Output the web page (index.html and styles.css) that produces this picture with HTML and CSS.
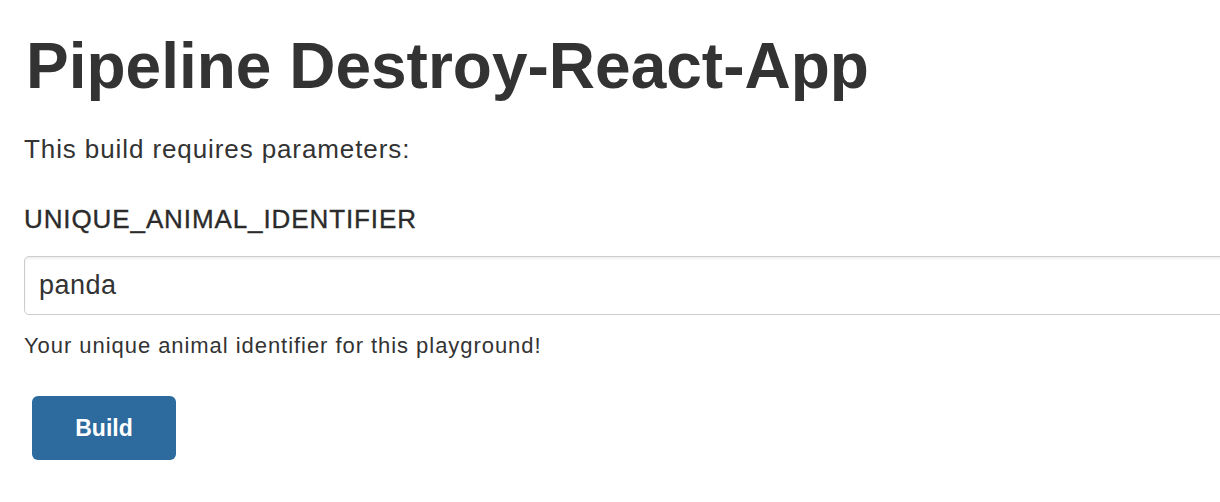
FILE: index.html
```html
<!DOCTYPE html>
<html>
<head>
<meta charset="utf-8">
<link rel="stylesheet" href="styles.css">
</head>
<body>
<main class="page">
  <h1 class="title">Pipeline Destroy-React-App</h1>
  <p class="intro">This build requires parameters:</p>
  <div class="param">
    <div class="param-name">UNIQUE_ANIMAL_IDENTIFIER</div>
    <div class="param-input">panda</div>
    <div class="param-help">Your unique animal identifier for this playground!</div>
  </div>
  <div class="actions">
    <button class="build-btn">Build</button>
  </div>
</main>
</body>
</html>
```

FILE: styles.css
```css
html, body {
  margin: 0;
  padding: 0;
  background: #fff;
  overflow: hidden;
}
body {
  font-family: "Liberation Sans", Arial, sans-serif;
  color: #333;
}
.page {
  display: flex;
  flex-direction: column;
  padding-left: 24px;
}
.title {
  margin: 30px 0 0 2px;
  font-size: 64px;
  line-height: 72px;
  font-weight: bold;
  color: #333;
}
.intro {
  margin: 32px 0 0 0;
  font-size: 26px;
  line-height: 30px;
  letter-spacing: 0.9px;
}
.param {
  display: flex;
  flex-direction: column;
}
.param-name {
  margin-top: 40px;
  font-size: 26px;
  line-height: 30px;
  letter-spacing: 0.9px;
  color: #2b2b2b;
  -webkit-text-stroke: 0.35px #2b2b2b;
}
.param-input {
  margin-top: 22px;
  margin-right: -20px;
  height: 57px;
  box-sizing: content-box;
  border: 1px solid #ccc;
  border-radius: 5px;
  box-shadow: inset 0 2px 2px rgba(0,0,0,0.06);
  padding: 0 14px;
  font-size: 27px;
  line-height: 57px;
  letter-spacing: 0.5px;
}
.param-help {
  margin-top: 18px;
  font-size: 22px;
  line-height: 26px;
  letter-spacing: 0.95px;
}
.actions {
  display: flex;
  margin-top: 37px;
  padding-left: 8px;
}
.build-btn {
  width: 144px;
  height: 64px;
  border: none;
  border-radius: 6px;
  background: #2d6a9e;
  color: #fff;
  font-family: "Liberation Sans", Arial, sans-serif;
  font-weight: bold;
  font-size: 23px;
  padding: 0;
}
```
